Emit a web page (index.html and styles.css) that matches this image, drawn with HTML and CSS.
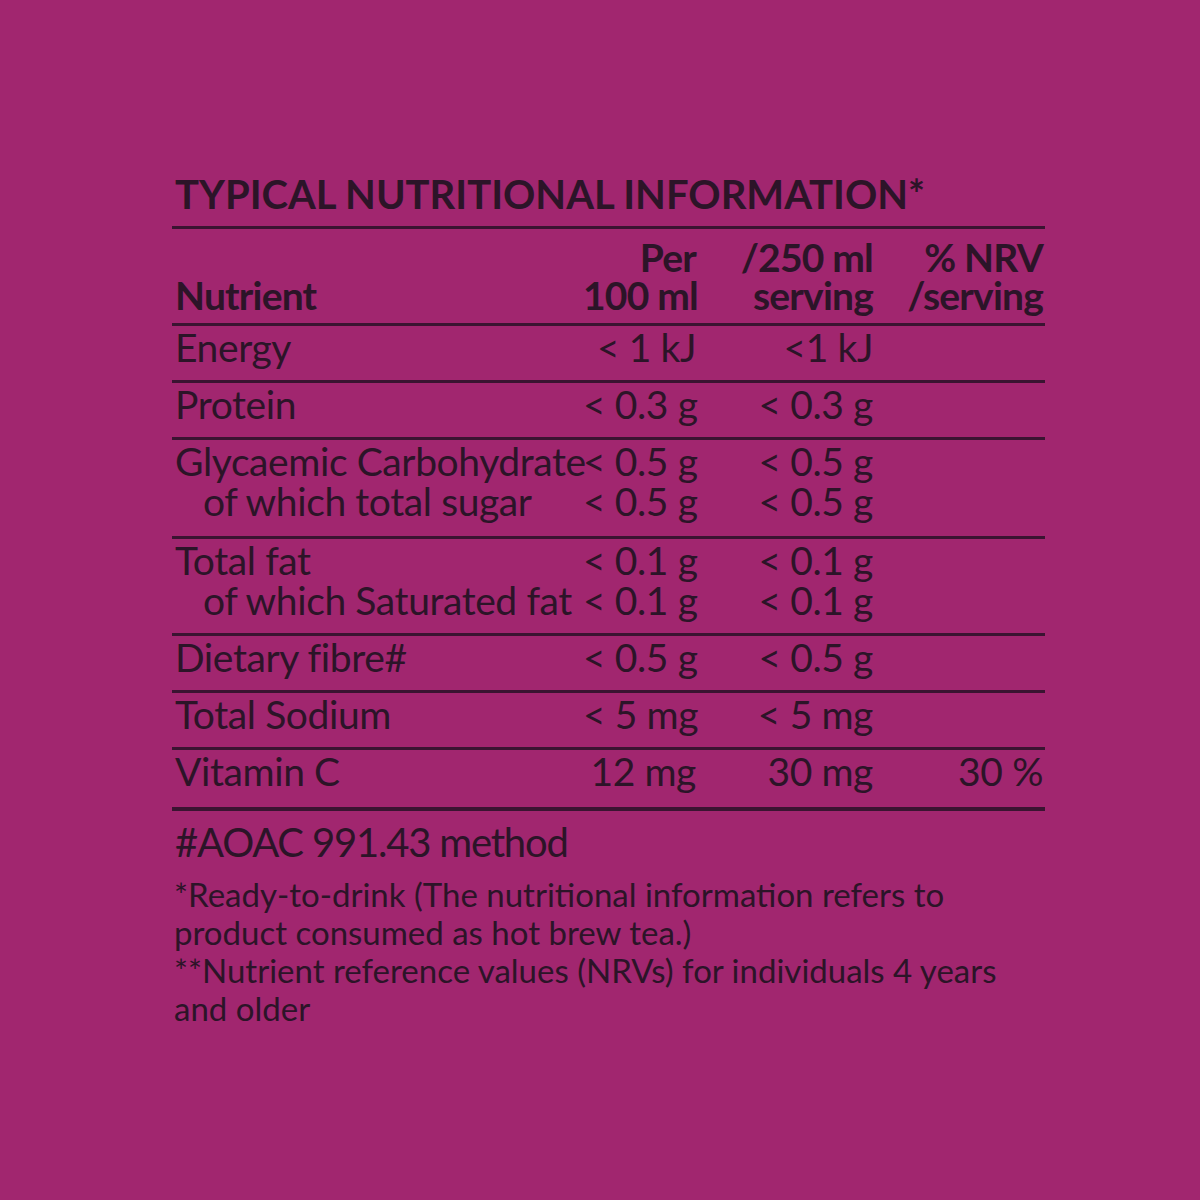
FILE: index.html
```html
<!DOCTYPE html>
<html lang="en">
<head>
<meta charset="utf-8">
<title>Typical Nutritional Information</title>
<link rel="stylesheet" href="styles.css">
</head>
<body>
<div class="panel">
  <div class="title">TYPICAL NUTRITIONAL INFORMATION*</div>
  <div class="row head">
    <div class="c1">Nutrient</div>
    <div class="c2">Per<br>100 ml</div>
    <div class="c3">/250 ml<br>serving</div>
    <div class="c4">% NRV<br>/serving</div>
  </div>
  <div class="row">
    <div class="c1">Energy</div>
    <div class="c2">&lt; 1 kJ</div>
    <div class="c3">&lt;1 kJ</div>
    <div class="c4"></div>
  </div>
  <div class="row">
    <div class="c1">Protein</div>
    <div class="c2">&lt; 0.3 g</div>
    <div class="c3">&lt; 0.3 g</div>
    <div class="c4"></div>
  </div>
  <div class="row tall">
    <div class="c1">Glycaemic Carbohydrate<br><span class="sub">of which total sugar</span></div>
    <div class="c2">&lt; 0.5 g<br>&lt; 0.5 g</div>
    <div class="c3">&lt; 0.5 g<br>&lt; 0.5 g</div>
    <div class="c4"></div>
  </div>
  <div class="row">
    <div class="c1">Total fat<br><span class="sub">of which Saturated fat</span></div>
    <div class="c2">&lt; 0.1 g<br>&lt; 0.1 g</div>
    <div class="c3">&lt; 0.1 g<br>&lt; 0.1 g</div>
    <div class="c4"></div>
  </div>
  <div class="row">
    <div class="c1">Dietary fibre#</div>
    <div class="c2">&lt; 0.5 g</div>
    <div class="c3">&lt; 0.5 g</div>
    <div class="c4"></div>
  </div>
  <div class="row">
    <div class="c1">Total Sodium</div>
    <div class="c2">&lt; 5 mg</div>
    <div class="c3">&lt; 5 mg</div>
    <div class="c4"></div>
  </div>
  <div class="row last">
    <div class="c1">Vitamin C</div>
    <div class="c2">12 mg</div>
    <div class="c3">30 mg</div>
    <div class="c4">30 %</div>
  </div>
  <div class="method">#AOAC 991.43 method</div>
  <div class="notes">*Ready-to-drink (The nutritional information refers to<br>product consumed as hot brew tea.)<br>**Nutrient reference values (NRVs) for individuals 4 years<br>and older</div>
</div>
</body>
</html>
```
FILE: styles.css
```css
html, body {
  margin: 0;
  padding: 0;
}
body {
  background: #a1266f;
  color: #2c1428;
  font-family: Lato, "Open Sans", sans-serif;
  width: 1200px;
  height: 1200px;
}
.panel {
  width: 873px;
  margin-left: 172px;
  padding-top: 170px;
}
.title {
  font-size: 40px;
  font-weight: 700;
  line-height: 48px;
  letter-spacing: 0;
  padding-left: 3px;
  padding-bottom: 8px;
  border-bottom: 3px solid #3a1431;
}
.row {
  display: grid;
  grid-template-columns: 408px 113px 177px 170px;
  font-size: 39px;
  line-height: 40px;
  padding: 1px 5px 13px 3px;
  border-bottom: 3px solid #3a1431;
  letter-spacing: -0.4px;
}
.row.head {
  font-weight: 700;
  line-height: 38px;
  letter-spacing: -0.8px;
  padding-top: 9px;
  padding-bottom: 9px;
  align-items: end;
}
.row.tall {
  padding-bottom: 15px;
}
.row.last {
  padding-bottom: 16px;
  border-bottom-width: 4px;
}
.c2, .c3, .c4 {
  text-align: right;
  white-space: nowrap;
}
.c1 {
  white-space: nowrap;
}
.sub {
  padding-left: 28px;
}
.method {
  font-size: 40px;
  line-height: 46px;
  letter-spacing: -1.2px;
  padding: 8px 0 0 3px;
}
.notes {
  font-size: 33px;
  line-height: 38px;
  letter-spacing: 0;
  padding: 10px 0 0 2px;
}
```
